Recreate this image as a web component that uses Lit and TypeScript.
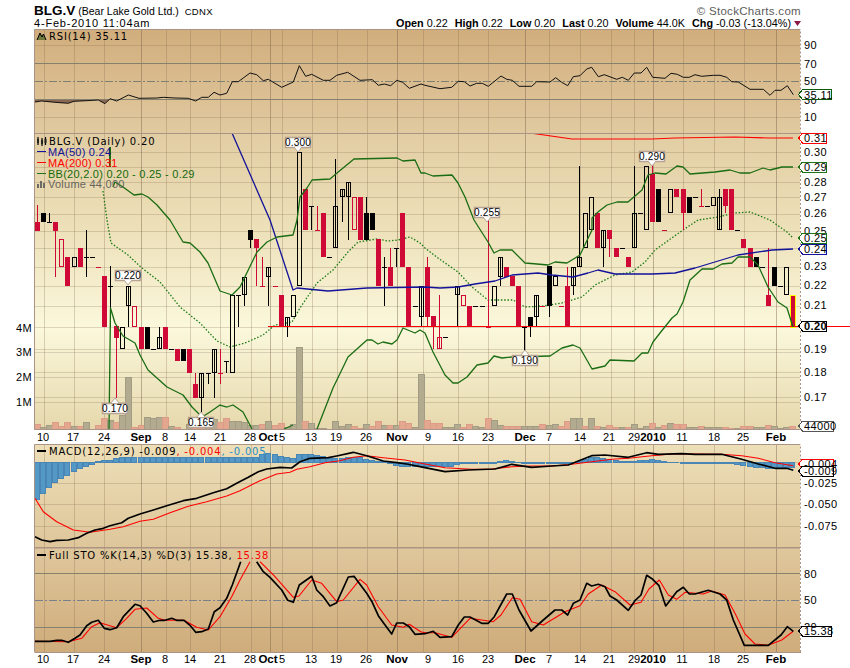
import { LitElement, html, svg, css } from 'lit';
import { customElement } from 'lit/decorators.js';

// all chart coordinates are page pixels, each svg's viewBox starts at its own top
const LEFT = 34.5;
const RIGHT = 800.5;

const MAJOR = [141, 270, 397, 525, 653, 776];
const MINOR = [44, 74, 104, 166, 190, 220, 251, 282, 312, 337, 367, 423, 458, 488, 549, 580, 611, 634, 683, 714, 744];

const DATES: [number, string, boolean?][] = [
  [43, '10'], [73, '17'], [104, '24'], [141, 'Sep', true], [165, '8'], [190, '14'], [220, '21'], [250, '28'],
  [268, 'Oct', true], [282, '5'], [311, '13'], [336, '19'], [366, '26'], [397, 'Nov', true], [428, '9'], [458, '16'],
  [488, '23'], [525, 'Dec', true], [549, '7'], [580, '14'], [609, '21'], [634, '29'], [653, '2010', true], [682, '11'],
  [714, '18'], [743, '25'], [776, 'Feb', true],
];

// style, body top, body bottom, wick top, wick bottom
// R/K filled red/black, r/H hollow red/black, m/l bare line red/black, n no trade
type Candle = [string, number, number, number?, number?];
const CANDLES: Candle[] = [
  ['R', 222, 231, 205], ['K', 213, 222], ['l', 222, 222, 213], ['R', 222, 231, 222, 277], ['r', 239, 267], ['R', 257, 286],
  ['H', 257, 267], ['R', 248, 267], ['l', 257, 257, 230, 277], ['l', 257, 257], ['m', 267, 267], ['R', 276, 327],
  ['l', 286, 286, 266, 327], ['R', 326, 338, 326, 398], ['H', 327, 349], ['H', 286, 306, 286, 327], ['r', 306, 327], ['R', 327, 349],
  ['K', 327, 349], ['l', 349, 349], ['H', 337, 349, 327], ['R', 327, 349], ['l', 349, 349], ['R', 349, 361],
  ['K', 349, 361], ['R', 349, 373], ['R', 384, 398, 373], ['H', 373, 398, 373, 412], ['l', 373, 373, 373, 384], ['H', 349, 373, 349, 398],
  ['m', 373, 373, 349, 384], ['l', 361, 361, 361, 373], ['H', 295, 373], ['l', 295, 295, 295, 327], ['H', 277, 295, 277, 306], ['K', 230, 240, 230, 248],
  ['R', 239, 248, 239, 286], ['m', 286, 286, 257, 286], ['H', 267, 277, 267, 306], ['m', 286, 286], ['R', 295, 327], ['H', 317, 327, 317, 337],
  ['H', 295, 317], ['H', 152, 286], ['R', 189, 230], ['l', 206, 206, 206, 230], ['m', 230, 230, 206, 230], ['R', 213, 257],
  ['l', 257, 257], ['H', 206, 248, 159, 248], ['H', 189, 197, 189, 222], ['H', 182, 197, 182, 240], ['r', 197, 230], ['R', 197, 240],
  ['K', 213, 240, 197, 240], ['K', 213, 230], ['R', 239, 286], ['l', 267, 267, 257, 306], ['R', 267, 286, 248], ['l', 248, 248, 248, 267],
  ['R', 213, 267], ['R', 267, 327], ['l', 306, 306], ['H', 286, 317, 286, 327], ['R', 267, 317, 257, 327], ['R', 316, 327, 316, 349],
  ['r', 337, 349, 295], ['l', 337, 337], ['n', 0, 0], ['H', 286, 295, 286, 327], ['r', 295, 306], ['R', 306, 327],
  ['l', 306, 306], ['l', 306, 306], ['m', 327, 327, 220, 327], ['H', 286, 306], ['H', 257, 277, 257, 286], ['R', 267, 277],
  ['R', 276, 286], ['R', 286, 327], ['l', 327, 327, 327, 350], ['K', 317, 327, 317, 337], ['H', 295, 317, 295, 327], ['m', 306, 306],
  ['K', 266, 306, 266, 317], ['H', 276, 286], ['m', 306, 306], ['R', 286, 327, 267], ['H', 267, 286, 267, 295], ['H', 257, 267, 166],
  ['H', 213, 248], ['H', 197, 230], ['R', 213, 248], ['H', 230, 248, 230, 267], ['R', 230, 239, 230, 257], ['R', 248, 257],
  ['l', 248, 248], ['R', 257, 267], ['H', 213, 248, 166], ['l', 213, 213], ['H', 166, 230], ['R', 174, 222, 166],
  ['K', 189, 222], ['m', 230, 230], ['H', 189, 213], ['R', 189, 197], ['R', 189, 213, 189, 230], ['K', 197, 213],
  ['l', 197, 197], ['m', 206, 206, 189, 206], ['l', 206, 206], ['H', 197, 206], ['H', 197, 230, 189], ['R', 189, 206, 189, 213],
  ['R', 189, 230], ['l', 230, 230], ['R', 239, 248], ['R', 248, 267], ['K', 257, 267], ['l', 267, 267],
  ['R', 295, 306, 248], ['K', 267, 286], ['l', 286, 286], ['H', 267, 295], ['R', 295, 327],
];

// bar height per day: positive grey (up volume), negative pink
const VOLUME = [
  -5, 2, 4, -7, -3, -7, 3, -3, 7, 0, -4, -11, 9, -7, 14, 52, -2, -4, 12, 11, 12, -12, 3, -2, 0, 5, -2, -8, 9, 10, -7, -11,
  8, 8, 7, 4, 4, -5, 8, -4, -6, 2, 5, 82, -8, 6, 1, 1, 0, 8, 3, 5, -3, -1, 5, -3, -8, 4, -4, 4, -8, -6, 2, 55,
  -9, -6, -6, 2, 2, 5, -2, -5, 3, 2, -11, 9, 4, -3, -3, -3, 3, 3, 3, -5, 4, 5, -3, -8, 11, 11, -3, 11, -3, 2, -4, -2,
  2, -2, 5, 1, 3, -6, 2, -4, 6, -5, -5, 2, 2, -3, 2, 2, 2, -2, -1, 1, -3, -3, 2, 2, -4, 3, 1, 2, -3,
];

// y of the MACD histogram bar end for each day, in 3x crop rows (zero line is 67)
const HIST = [
  178, 160, 142, 128, 115, 105, 95, 85, 78, 72, 63, 60, 60, 55, 53, 52, 52, 52, 52, 52, 52, 52, 52, 52, 52, 52, 52, 52, 52, 52,
  52, 52, 52, 52, 52, 52, 52, 42, 40, 42, 48, 52, 55, 42, 42, 42, 45, 50, 55, 55, 55, 52, 52, 52, 58, 62, 65, 65, 70, 75, 78, 80, 80, 80,
  80, 80, 80, 80, 78, 73, 70, 68, 68, 68, 68, 68, 64, 62, 64, 66, 68, 68, 69, 69, 69, 69, 69, 69, 66, 63, 58, 53, 53, 55, 58, 60, 63, 65,
  63, 60, 60, 58, 62, 64, 66, 67, 68, 68, 68, 68, 70, 70, 70, 70, 70, 72, 76, 80, 82, 83, 85, 86, 85, 83, 82,
];

// points were measured on 3x crops, zoomed(ox, oy, 'zx,zy ...') brings them back to page pixels
const zoomed = (ox: number, oy: number, s: string) =>
  s.trim().split(/\s+/).map((p) => {
    const [x, y] = p.split(',').map(Number);
    return `${(ox + x / 3).toFixed(1)},${(oy + y / 3).toFixed(1)}`;
  }).join(' ');

const BB_UP = '113,187 115,182 123,187 134,195 142,194 148,197 157,205 163,212 170,220 183,242 190,243 200,252 208,263 220,291 232,295 240,287 257,252 267,242 277,237 293,235 297,220 300,197 307,188 312,180 330,179 337,173 354,159 397,158 403,161 415,160 421,173 425,173 433,176 452,175 458,183 465,197 474,220 488,242 494,253 500,250 512,250 525,263 537,264 548,265 555,262 567,263 580,255 592,230 592,218 598,212 607,205 617,202 628,202 642,190 648,175 655,173 666,174 677,166 683,167 690,174 715,172 730,170 740,173 750,173 763,168 770,170 782,167 793,167';
const BB_LOW_A = '109,429 110.5,308 115,323 123,336 135,343 140,355 148,370 167,387 183,395 192,407 202,417 210,412 220,405 227,407 233,405 243,412 252,429';
const BB_LOW_B = '284,429 293,425';
const BB_LOW_C = '317,429 333,388 348,357 367,340 372,340 378,344 383,342 392,344 397,340 403,328 415,333 420,330 425,333 433,352 445,375 453,383 458,383 467,377 477,365 488,363 494,356 502,358 512,357 550,356 562,348 573,345 580,348 592,369 605,366 610,360 634,361 642,353 648,353 653,342 660,333 672,318 677,314 683,302 690,280 702,269 713,269 722,264 732,263 738,257 750,257 758,265 768,287 778,302 787,308 793,327';
const BB_MID = '103,191 107,220 111,243 128,255 142,268 160,282 180,307 200,323 217,341 230,347 245,343 263,335 275,325 292,322 300,308 317,283 333,270 348,252 358,242 377,239 388,241 398,240 410,237 420,243 425,248 438,258 458,272 472,287 488,300 500,300 513,300 525,307 543,306 562,303 582,297 595,285 615,275 632,272 645,262 655,250 683,230 698,220 718,217 735,213 750,212 765,218 770,220 787,232 793,238';
const MA50 = '232,133 270,220 293,290 297,288 328,291 367,288 425,287 440,288 458,287 475,284 495,281 512,275 538,273 552,275 573,277 588,273 598,270 615,274 652,274 675,273 695,268 738,255 772,250 793,249';
const MA200 = '530,133 572,139 652,139 675,138 735,137 768,138 793,138';

const RSI = zoomed(0, 0, '105,306 125,303 165,307 205,310 222,304 260,302 295,300 315,311 330,296 350,303 385,285 417,295 470,294 490,292 525,294 565,295 587,303 605,292 625,292 642,277 660,285 680,280 697,245 715,245 750,219 770,224 790,242 805,238 845,262 880,246 898,197 917,229 935,223 970,241 990,241 1010,226 1043,217 1080,241 1117,239 1135,256 1153,252 1172,257 1190,241 1208,247 1228,265 1263,252 1275,256')
  + ' ' + zoomed(425, 0, '45,266 80,262 100,244 118,245 135,258 155,250 172,250 190,259 228,228 245,238 262,241 282,259 320,259 335,245 375,246 392,233 410,247 428,257 445,230 465,227 485,207 500,202 520,230 538,224 575,238 592,232 610,241 628,219 648,219 665,202 683,232 720,235 738,220 757,223 775,232 793,232 810,224 830,229 865,226 885,226 905,232 920,245 940,246 975,268 1015,268 1035,286 1050,271 1068,271 1087,257 1105,284');
const RSI_FILL = zoomed(0, 0, '105,306 125,303 165,307 205,310 222,304 260,302 295,300 315,311 330,298');

const MACD = zoomed(0, 440, '105,290 125,300 150,305 170,301 205,300 235,293 260,280 285,270 310,265 330,257 365,248 385,235 420,222 460,210 500,197 550,182 590,175 640,158 680,146 710,130 745,112 775,95 800,87 840,82 875,84 900,65 930,55 985,53 1010,48 1060,37 1100,47 1150,63 1190,68 1220,72 1275,83')
  + ' ' + zoomed(425, 440, '60,95 130,90 210,87 260,73 320,82 380,78 430,75 460,63 500,47 540,45 610,52 665,38 700,43 770,41 810,43 890,43 950,58 1000,72 1050,85 1085,85 1105,91');
const SIGNAL = zoomed(0, 440, '105,175 130,215 170,245 220,270 270,277 330,268 370,260 420,244 460,238 510,218 565,199 620,185 680,168 720,152 780,122 830,102 870,97 890,88 930,80 975,68 1020,62 1060,52 1100,47 1150,53 1215,60 1275,72')
  + ' ' + zoomed(425, 440, '60,83 140,88 200,87 260,80 320,78 380,78 440,73 500,65 560,58 610,55 680,47 740,42 810,42 890,43 950,47 1000,55 1050,68 1105,77');

const K_A = zoomed(0, 440, '105,604 150,604 170,601 185,601 205,607 225,595 240,585 260,557 275,547 295,541 313,565 330,569 350,563 370,530 405,493 420,497 440,520 460,546 480,541 495,541 515,535 530,541 552,541 570,556 587,577 605,575 625,567 643,515 660,503 680,475 697,435 722,365');
const K_B = zoomed(0, 440, '770,365 790,395 810,412 845,450 863,481 880,487 898,435 935,409 950,450 970,470 990,498 1010,488 1045,411 1062,409 1100,460 1117,487 1135,527 1153,552 1175,582 1190,549 1210,549 1228,560 1245,583 1275,581')
  + ' ' + zoomed(425, 440, '25,574 45,592 80,590 100,555 118,531 135,531 170,550 190,550 208,530 245,462 262,462 282,510 318,573 355,540 390,510 410,510 428,525 445,490 465,480 485,430 500,438 520,433 540,440 555,468 575,480 610,511 630,482 648,465 665,406 683,418 702,437 722,498 755,455 775,442 793,462 810,462 850,451 885,462 905,480 925,540 958,616 1030,616 1068,585 1087,560 1105,574');
const D_A = zoomed(0, 440, '105,604 205,605 245,595 275,560 300,548 330,557 350,563 380,535 405,508 440,504 475,535 495,541 552,541 590,562 625,570 660,530 695,470 720,420 750,365');
const D_B = zoomed(0, 440, '780,365 825,410 880,472 897,468 935,420 965,430 1010,485 1030,480 1080,418 1100,435 1135,500 1175,555 1210,562 1228,553 1262,575 1275,578')
  + ' ' + zoomed(425, 440, '30,578 80,592 135,535 205,545 228,525 262,473 285,478 320,545 355,555 420,515 465,497 490,462 530,435 570,455 615,495 648,487 672,447 703,420 730,465 755,478 780,457 835,462 860,453 900,465 930,520 960,582 990,612 1030,616 1070,600 1105,574');

const dayX = (i: number) => Math.round(37 + 6.09 * i);

const grid = (top: number, bottom: number) => svg`
  ${MINOR.map((x) => svg`<line class="vgrid" x1=${x + 0.5} x2=${x + 0.5} y1=${top} y2=${bottom}></line>`)}
  ${MAJOR.map((x) => svg`<line class="vgrid major" x1=${x + 0.5} x2=${x + 0.5} y1=${top} y2=${bottom}></line>`)}
`;

const hgrid = (ys: number[]) =>
  ys.map((y) => svg`<line class="hgrid" x1=${LEFT} x2=${RIGHT} y1=${y + 0.5} y2=${y + 0.5}></line>`);

const frame = (top: number, bottom: number) => svg`
  <path class="frame" d="M${RIGHT} ${top}H${LEFT}V${bottom}"></path>
  <path class="frame" d="M${RIGHT} ${top}V${bottom}"></path>
  <path class="frame dotted" d="M${RIGHT} ${top}V${bottom}"></path>
`;

const line = (pts: string, cls: string) => svg`<polyline class=${cls} points=${pts}></polyline>`;

const label = (x: number, y: number, text: string, cls = 'scale') =>
  svg`<text class=${cls} x=${x} y=${y}>${text}</text>`;

// value tag on the right axis, the tip points at the last value
const tag = (y: number, text: string, color: string, end: number, cls = 'scale') => svg`
  <polygon fill="#fff" stroke=${color} points="${798.5},${y} ${802.5},${y - 5} ${end + 0.5},${y - 5} ${end + 0.5},${y + 5} ${802.5},${y + 5}"></polygon>
  <text class=${cls} x="804" y=${y + 4}>${text}</text>
`;

// price callout, up = the pointer sits on top of the box
const callout = (cx: number, top: number, text: string, up = false) => {
  const b = top + 10;
  const tip = up ? `M${cx - 4} ${top}L${cx} ${top - 5}L${cx + 4} ${top}` : `M${cx - 4} ${b}L${cx} ${b + 5}L${cx + 4} ${b}`;
  return svg`
    <rect class="callout" x=${cx - 12.5} y=${top + 0.5} width="25" height="10"></rect>
    <path class="pointer" d=${tip}></path>
    <text class="callout-text" x=${cx} y=${top + 9}>${text}</text>
  `;
};

const dates = (y: number) =>
  DATES.map(([x, t, bold]) => svg`<text class=${bold ? 'date bold' : 'date'} x=${x} y=${y}>${t}</text>`);

const candle = ([style, top, bot, hi, lo]: Candle, i: number) => {
  if (style === 'n') return null;
  const x = dayX(i);
  const red = style === 'R' || style === 'r' || style === 'm';
  const color = red ? '#cf0a36' : '#000';
  const last = i === CANDLES.length - 1;
  const wick = hi !== undefined
    ? svg`<line stroke=${color} x1=${x + 0.5} x2=${x + 0.5} y1=${hi} y2=${lo ?? bot}></line>`
    : null;
  if (style === 'R' || style === 'K') {
    return svg`${wick}<rect fill=${color} stroke=${last ? '#ff0' : 'none'} x=${x - 2} y=${top} width="5" height=${bot - top}></rect>`;
  }
  if (style === 'r' || style === 'H') {
    return svg`${wick}<rect fill="none" stroke=${color} x=${x - 1.5} y=${top + 0.5} width="4" height=${bot - top - 1}></rect>`;
  }
  return svg`${wick}<line stroke=${color} x1=${x - 2} x2=${x + 3} y1=${top + 0.5} y2=${top + 0.5}></line>`;
};

@customElement('app-root')
export class AppRoot extends LitElement {
  static styles = css`
    :host {
      display: block;
      width: 850px;
      height: 668px;
      background: #fff;
      overflow: hidden;
      font-family: "Liberation Sans", Arial, sans-serif;
      color: #000;
    }
    .head {
      height: 29px;
      padding: 0 49px 0 34px;
      box-sizing: border-box;
    }
    .row {
      display: flex;
      justify-content: space-between;
      align-items: baseline;
    }
    .top { height: 17px; line-height: 20px; }
    .ticker { font-size: 13.5px; font-weight: bold; }
    .name { font-size: 10.5px; margin-left: 3px; }
    .exch { font-size: 9.5px; margin-left: 6px; letter-spacing: 0.3px; }
    .brand { font-size: 11.5px; color: #5c5c5c; letter-spacing: 0.3px; }
    .when { font-size: 11px; letter-spacing: 0.8px; line-height: 12px; }
    .quote { display: flex; gap: 7px; font-size: 10.8px; line-height: 12px; }
    .quote b { font-weight: bold; }
    .down { width: 7px; height: 5px; align-self: center; margin-left: -4px; }
    .panel { display: block; }
    svg text { font-family: "Liberation Sans", Arial, sans-serif; }
    line, polygon, rect { shape-rendering: crispEdges; }
    .vgrid { stroke: rgba(125, 100, 75, 0.27); }
    .vgrid.major { stroke: rgba(115, 90, 70, 0.42); }
    .hgrid { stroke: rgba(125, 100, 75, 0.24); }
    .level { stroke: #86806f; fill: none; }
    .midlevel { stroke: #7f8074; stroke-dasharray: 8 2 2 2; }
    .midlevel.blue { stroke: #77808c; }
    .frame { fill: none; stroke: #ac9485; }
    .dotted { stroke: #fff; stroke-dasharray: 2 2; }
    .thin, .thick, .green, .dots, .blueline, .redline { fill: none; stroke-linejoin: round; }
    .thin { stroke: #111; stroke-width: 1; }
    .thick { stroke: #000; stroke-width: 1.7; }
    .redline { stroke: #f00; stroke-width: 1.1; }
    .green { stroke: #1b6d13; stroke-width: 1.3; }
    .dots { stroke: #1b7a13; stroke-width: 1.3; stroke-dasharray: 1.5 1.8; }
    .blueline { stroke: #12129a; stroke-width: 1.3; }
    .support { stroke: #f00; stroke-width: 1.4; }
    .scale { font-size: 11px; fill: #000; letter-spacing: 0.4px; }
    .scale-bold { font-size: 11px; font-weight: bold; fill: #000; letter-spacing: 0.4px; }
    .left { text-anchor: end; }
    svg text.legend {
      font-family: "DejaVu Sans", sans-serif;
      font-size: 10px;
      fill: #000;
      letter-spacing: 0.8px;
    }
    .legend2 { font-size: 11px; letter-spacing: 0.25px; }
    .date { font-size: 11px; text-anchor: middle; fill: #000; }
    .date.bold { font-weight: bold; font-size: 11.5px; }
    .callout { fill: #fff; stroke: #b7a394; stroke-width: 1.5; shape-rendering: auto; }
    .pointer { fill: #fff; stroke: #b7a394; }
    .callout-text { font-size: 10px; text-anchor: middle; fill: #000; letter-spacing: 0.2px; }
    .hist { fill: #5499c6; stroke: #4a86b5; stroke-width: 1; }
  `;

  private rsi() {
    return html`<svg class="panel" width="850" height="104" viewBox="0 29 850 104">
      <defs>
        <linearGradient id="rsibg" x1="0" y1="0" x2="0" y2="1">
          <stop offset="0" stop-color="#d1ad7c"></stop>
          <stop offset="1" stop-color="#e1caa0"></stop>
        </linearGradient>
      </defs>
      <rect fill="url(#rsibg)" x=${LEFT} y="29" width="766" height="104"></rect>
      ${grid(30, 133)}
      ${hgrid([45, 117])}
      <line class="level" x1=${LEFT} x2=${RIGHT} y1="63.5" y2="63.5"></line>
      <line class="level midlevel" x1=${LEFT} x2=${RIGHT} y1="81.5" y2="81.5"></line>
      <line class="level" x1=${LEFT} x2=${RIGHT} y1="99.5" y2="99.5"></line>
      <polygon fill="#8b6650" points="${RSI_FILL} 110,99.5 35,99.5"></polygon>
      ${line(RSI, 'thin')}
      ${frame(29.5, 133)}
      <path fill="#6f7a3c" d="M37 40L40 33L42 36L43 34L46 40Z"></path>
      <path fill="none" stroke="#000" d="M37 40L40 33L42 37L43.5 34L46 40"></path>
      ${label(49, 40, 'RSI(14) 35.11', 'legend')}
      ${label(804, 49, '90')}
      ${label(804, 67.5, '70')}
      ${label(804, 85, '50')}
      ${label(804, 103.5, '30')}
      ${label(804, 121, '10')}
      ${tag(94.5, '35.11', '#0a5a0a', 831)}
    </svg>`;
  }

  private price() {
    const ys = [152, 167, 182, 197, 214, 231, 248, 267, 286, 306, 327, 349, 372, 397];
    const scale: [number, string][] = [
      [152, '0.30'], [167, '0.29'], [182, '0.28'], [197, '0.27'], [213, '0.26'], [231, '0.25'], [266, '0.23'],
      [285, '0.22'], [305, '0.21'], [349, '0.19'], [372, '0.18'], [397, '0.17'],
    ];
    return html`<svg class="panel" width="850" height="311" viewBox="0 133 850 311">
      <defs>
        <linearGradient id="pricebg" x1="0" y1="0" x2="0" y2="1">
          <stop offset="0" stop-color="#e2cda3"></stop>
          <stop offset="0.3" stop-color="#ecdfb7"></stop>
          <stop offset="0.66" stop-color="#fbf8dc"></stop>
          <stop offset="1" stop-color="#e6d8ac"></stop>
        </linearGradient>
      </defs>
      <rect fill="url(#pricebg)" x=${LEFT} y="133" width="766" height="296"></rect>
      ${grid(133, 429)}
      ${hgrid(ys)}
      ${hgrid([402, 377, 352])}
      ${VOLUME.map((v, i) => v === 0 ? null : svg`<rect fill=${v > 0 ? '#b2ab90' : '#e3a790'} stroke=${v > 0 ? '#a39c84' : '#dc9c88'}
        x=${dayX(i) - 2.5} y=${429.5 - Math.abs(v)} width="6" height=${Math.abs(v)}></rect>`)}
      ${line(MA200, 'redline')}
      ${line(BB_MID, 'dots')}
      ${CANDLES.map(candle)}
      <line class="support" x1="268" x2="850" y1="326.5" y2="326.5"></line>
      ${line(MA50, 'blueline')}
      ${line(BB_UP, 'green')}
      ${line(BB_LOW_A, 'green')}
      ${line(BB_LOW_B, 'green')}
      ${line(BB_LOW_C, 'green')}
      <line class="green" x1="110" x2="110" y1="147" y2="167"></line>
      ${frame(133, 429.5)}
      <line class="frame" x1=${LEFT} x2=${RIGHT} y1="133.5" y2="133.5"></line>
      <line class="frame" x1=${LEFT} x2=${RIGHT} y1="429.5" y2="429.5"></line>
      ${callout(298, 137, '0.300')}
      ${callout(652, 151, '0.290')}
      ${callout(487, 207, '0.255')}
      ${callout(128, 270, '0.220')}
      ${callout(115, 403, '0.170', true)}
      ${callout(201, 417, '0.165', true)}
      ${callout(525, 355, '0.190', true)}
      <path d="M38 137V145M42 138V146M45.5 137V145" stroke="#000" stroke-width="1.2"></path>
      <path d="M37 139h2v4h-2zM41 140h2v4h-2zM44.5 139h2v4h-2z" fill="#222"></path>
      ${label(49, 144.5, 'BLG.V (Daily) 0.20', 'legend')}
      <line stroke="#12129a" stroke-width="1.5" x1="37" x2="46" y1="151.5" y2="151.5"></line>
      <text class="legend2" fill="#12129a" x="48" y="155.5">MA(50) 0.24</text>
      <line stroke="#f00" stroke-width="1.5" x1="37" x2="46" y1="162.5" y2="162.5"></line>
      <text class="legend2" fill="#f00" x="48" y="166.5">MA(200) 0.31</text>
      <line stroke="#1f7317" stroke-width="1.5" x1="37" x2="46" y1="173.5" y2="173.5"></line>
      <text class="legend2" fill="#136a0d" x="48" y="177.5">BB(20,2.0) 0.20 - 0.25 - 0.29</text>
      <path d="M37 188v-4h2v4zM40 188v-7h2v7zM43 188v-5h2v5z" fill="#6b6b66"></path>
      <text class="legend2" fill="#66665f" x="48" y="188">Volume 44,000</text>
      ${scale.map(([y, t]) => label(804, y + 4, t))}
      ${label(32, 332, '4M', 'scale left')}
      ${label(32, 356, '3M', 'scale left')}
      ${label(32, 381, '2M', 'scale left')}
      ${label(32, 406, '1M', 'scale left')}
      ${tag(138, '0.31', '#f00', 826)}
      ${tag(167, '0.29', '#1f7317', 826)}
      ${tag(238, '0.25', '#1f7317', 826)}
      ${tag(249, '0.24', '#12129a', 826)}
      ${tag(326, '0.20', '#000', 826, 'scale-bold')}
      ${tag(426, '44000', '#555', 833)}
      ${dates(441)}
    </svg>`;
  }

  private macd() {
    const zero = 462.5;
    return html`<svg class="panel" width="850" height="104" viewBox="0 444 850 104">
      <defs>
        <linearGradient id="macdbg" x1="0" y1="0" x2="0" y2="1">
          <stop offset="0" stop-color="#eddfb8"></stop>
          <stop offset="1" stop-color="#dec69a"></stop>
        </linearGradient>
      </defs>
      <rect fill="url(#macdbg)" x=${LEFT} y="444" width="766" height="104"></rect>
      ${grid(445, 548)}
      ${hgrid([462, 483, 504, 526])}
      ${HIST.map((z, i) => {
        const end = 440 + z / 3;
        return svg`<rect class="hist" x=${dayX(i) - 2.5} y=${Math.min(end, zero)} width="5" height=${Math.max(Math.abs(end - zero), 0.5)}></rect>`;
      })}
      ${line(SIGNAL, 'redline')}
      ${line(MACD, 'thick')}
      ${frame(444.5, 548)}
      <line class="frame" x1=${LEFT} x2=${RIGHT} y1="547.5" y2="547.5"></line>
      <line stroke="#000" stroke-width="2" x1="37" x2="46" y1="451" y2="451"></line>
      <text class="legend" x="49" y="455">MACD(12,26,9) -0.009<tspan fill="#f00">, -0.004</tspan><tspan fill="#2d8fc4">, -0.005</tspan></text>
      ${tag(464, '-0.004', '#f00', 833)}
      ${tag(471, '-0.009', '#000', 833)}
      ${label(804, 487, '-0.025')}
      ${label(804, 508, '-0.050')}
      ${label(804, 530, '-0.075')}
    </svg>`;
  }

  private sto() {
    return html`<svg class="panel" width="850" height="120" viewBox="0 548 850 120">
      <defs>
        <linearGradient id="stobg" x1="0" y1="0" x2="0" y2="1">
          <stop offset="0" stop-color="#dfc79c"></stop>
          <stop offset="1" stop-color="#cfac7b"></stop>
        </linearGradient>
      </defs>
      <rect fill="url(#stobg)" x=${LEFT} y="548" width="766" height="104"></rect>
      ${grid(548, 652)}
      <line class="level" x1=${LEFT} x2=${RIGHT} y1="573.5" y2="573.5"></line>
      <line class="level midlevel blue" x1=${LEFT} x2=${RIGHT} y1="600.5" y2="600.5"></line>
      <line class="level" x1=${LEFT} x2=${RIGHT} y1="627.5" y2="627.5"></line>
      ${line(D_A, 'redline')}
      ${line(D_B, 'redline')}
      ${line(K_A, 'thick')}
      ${line(K_B, 'thick')}
      ${frame(548, 652.5)}
      <line class="frame" x1=${LEFT} x2=${RIGHT} y1="652.5" y2="652.5"></line>
      <line stroke="#000" stroke-width="2" x1="37" x2="46" y1="555" y2="555"></line>
      <text class="legend" x="49" y="559">Full STO %K(14,3) %D(3) 15.38,<tspan fill="#f00"> 15.38</tspan></text>
      ${label(804, 577.5, '80')}
      ${label(804, 604, '50')}
      ${label(804, 631, '20')}
      ${tag(631, '15.38', '#000', 831)}
      ${dates(663)}
    </svg>`;
  }

  render() {
    return html`
      <div class="head">
        <div class="row top">
          <div>
            <span class="ticker">BLG.V</span><span class="name">(Bear Lake Gold Ltd.)</span><span class="exch">CDNX</span>
          </div>
          <span class="brand">© StockCharts.com</span>
        </div>
        <div class="row">
          <span class="when">4-Feb-2010 11:04am</span>
          <div class="quote">
            <span><b>Open</b> 0.22</span>
            <span><b>High</b> 0.22</span>
            <span><b>Low</b> 0.20</span>
            <span><b>Last</b> 0.20</span>
            <span><b>Volume</b> 44.0K</span>
            <span><b>Chg</b> -0.03 (-13.04%)</span>
            <svg class="down" viewBox="0 0 7 5"><path d="M0 0H7L3.5 5Z" fill="#8b1a46"></path></svg>
          </div>
        </div>
      </div>
      ${this.rsi()}
      ${this.price()}
      ${this.macd()}
      ${this.sto()}
    `;
  }
}
